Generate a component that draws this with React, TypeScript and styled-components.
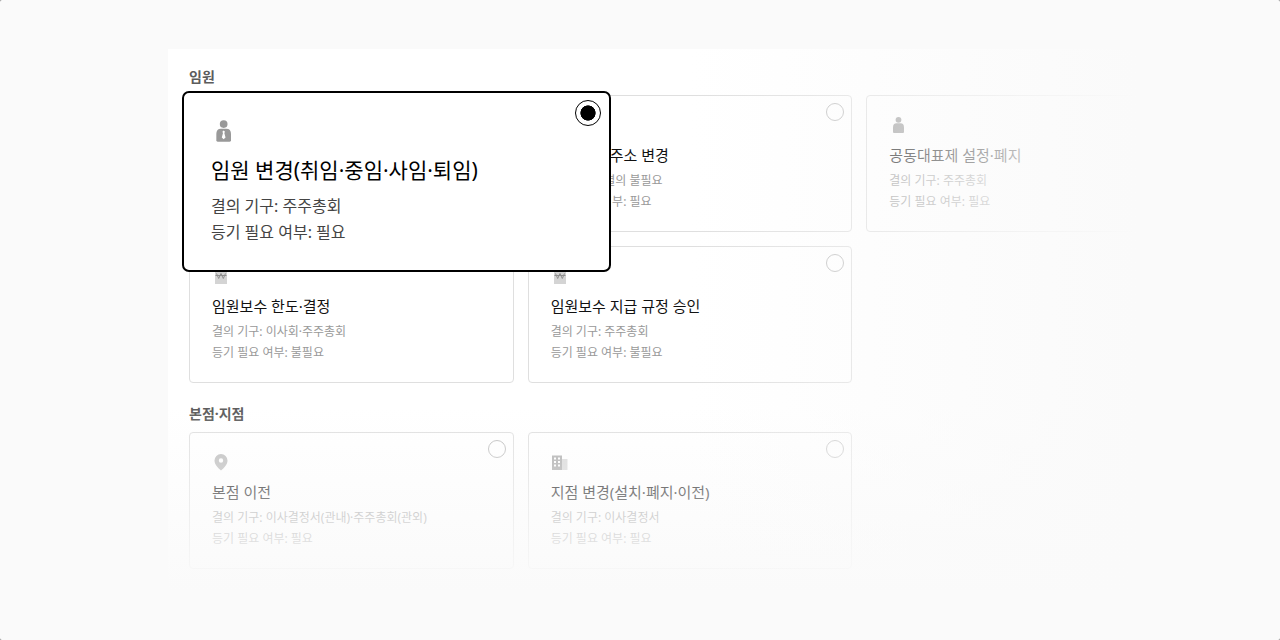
import React from "react";
import styled, { createGlobalStyle } from "styled-components";

const GlobalStyle = createGlobalStyle`
  *, *::before, *::after { box-sizing: border-box; }
  html { background: #8c8c8c; }
  body {
    margin: 0;
    font-family: "Noto Sans", "Noto Sans CJK KR", sans-serif;
    -webkit-font-smoothing: antialiased;
  }
`;

const Page = styled.main`
  min-height: 100vh;
  padding: 49px 68px 20px 168px;
  background: #fafafa;
  border-radius: 2px;
`;

const Panel = styled.form`
  position: relative;
  padding: 18px 21px 22px;
  background: #fff;

  &::after {
    content: "";
    position: absolute;
    inset: 0;
    z-index: 1;
    pointer-events: none;
    background:
      linear-gradient(to right, rgba(250, 250, 250, 0) 50%, #fafafa 93%),
      linear-gradient(to bottom, rgba(250, 250, 250, 0) 66%, #fafafa 100%);
  }
`;

const Section = styled.section`
  & + & { margin-top: 21px; }
`;

const SectionTitle = styled.h2`
  margin: 0 0 8px;
  font-size: 14px;
  line-height: 20px;
  font-weight: 700;
  color: #5c5c5c;
`;

const Cards = styled.div`
  display: grid;
  grid-template-columns: repeat(3, minmax(0, 1fr));
  gap: 14px;
`;

const Slot = styled.div`
  position: relative;
  min-height: 137px;
`;

const Card = styled.label<{ $large?: boolean }>`
  position: ${p => (p.$large ? "absolute" : "relative")};
  z-index: ${p => (p.$large ? 2 : 0)};
  top: ${p => (p.$large ? "-4px" : "auto")};
  left: ${p => (p.$large ? "-7px" : "auto")};
  width: ${p => (p.$large ? "132%" : "auto")};
  display: flex;
  flex-direction: column;
  align-items: flex-start;
  padding: ${p => (p.$large ? "26px 27px 25px" : "20px 22px 19px")};
  border: ${p => (p.$large ? "2px solid #000" : "1px solid #dfdfdf")};
  border-radius: ${p => (p.$large ? "7px" : "4px")};
  background: #fff;
  cursor: pointer;

  svg {
    width: ${p => (p.$large ? "24px" : "18px")};
    height: ${p => (p.$large ? "24px" : "18px")};
  }
`;

const Title = styled.span<{ $large?: boolean }>`
  margin-top: ${p => (p.$large ? "13px" : "9px")};
  margin-bottom: ${p => (p.$large ? "9px" : "3px")};
  font-size: ${p => (p.$large ? "21px" : "15px")};
  line-height: ${p => (p.$large ? "28px" : "24px")};
  font-weight: 400;
  color: ${p => (p.$large ? "#000" : "#111")};
  white-space: nowrap;
`;

const Detail = styled.span<{ $large?: boolean }>`
  font-size: ${p => (p.$large ? "16px" : "12px")};
  line-height: ${p => (p.$large ? "26px" : "21px")};
  color: ${p => (p.$large ? "#444" : "#999")};
  white-space: nowrap;
`;

const Radio = styled.input<{ $large?: boolean }>`
  appearance: none;
  position: absolute;
  top: 7px;
  right: ${p => (p.$large ? "8px" : "7px")};
  width: ${p => (p.$large ? "26px" : "18px")};
  height: ${p => (p.$large ? "26px" : "18px")};
  margin: 0;
  border: 1px solid #bdbdbd;
  border-radius: 50%;
  background: #fff;

  &:checked {
    border-color: #000;
    background: radial-gradient(circle closest-side, #000 61%, #fff 66%);
  }
`;

type IconName = "officer" | "person" | "won" | "pin" | "building";

function Icon({ name }: { name: IconName }) {
  return (
    <svg viewBox="0 0 18 18" aria-hidden="true">
      {(name === "officer" || name === "person") && (
        <>
          <circle cx="9.500" cy="3.800" r="2.900" fill="#999" />
          <path d="M4 11.200Q4 7.300 7.500 7.300h4Q15 7.300 15 11.200V16q0 1-1 1H5q-1 0-1-1Z" fill="#999" />
          {name === "officer" && <path d="m9.500 8.600 1 1-.5.900.9 3.400-1.400 1.200-1.400-1.200.9-3.400-.5-.9Z" fill="#fff" />}
        </>
      )}
      {name === "won" && (
        <>
          <path d="M3 2h12v15H3Z" fill="#d4d4d4" />
          <path d="M4.500 6.500l2.200 5L9 6.500l2.300 5 2.200-5M3.500 8.500h11" fill="none" stroke="#8f8f8f" />
        </>
      )}
      {name === "pin" && (
        <path
          fillRule="evenodd"
          d="M9 1a6.500 6.500 0 0 1 6.500 6.500c0 4-3.500 7.500-6.500 10C6 15 2.500 11.500 2.500 7.500A6.500 6.500 0 0 1 9 1Zm0 4.300a2.200 2.200 0 1 0 0 4.400A2.200 2.200 0 0 0 9 5.300Z"
          fill="#bcbcbc"
        />
      )}
      {name === "building" && (
        <>
          <path d="M10.500 6H16.500v11h-6Z" fill="#d8d8d8" />
          <path d="M1 2.500h10V17H1Z" fill="#ababab" />
          <path d="M3 4.500h2v2H3ZM7 4.500h2v2H7ZM3 8h2v2H3ZM7 8h2v2H7ZM3 11.500h2v2H3ZM7 11.500h2v2H7Z" fill="#fff" />
        </>
      )}
    </svg>
  );
}

interface Item {
  icon: IconName;
  title: string;
  organ: string;
  registry: string;
  large?: boolean;
}

const sections: { name: string; items: Item[] }[] = [
  {
    name: "임원",
    items: [
      { icon: "officer", title: "임원 변경(취임·중임·사임·퇴임)", organ: "주주총회", registry: "필요", large: true },
      { icon: "person", title: "대표이사 주소 변경", organ: "결의 불필요", registry: "필요" },
      { icon: "person", title: "공동대표제 설정·폐지", organ: "주주총회", registry: "필요" },
      { icon: "won", title: "임원보수 한도·결정", organ: "이사회·주주총회", registry: "불필요" },
      { icon: "won", title: "임원보수 지급 규정 승인", organ: "주주총회", registry: "불필요" },
    ],
  },
  {
    name: "본점·지점",
    items: [
      { icon: "pin", title: "본점 이전", organ: "이사결정서(관내)·주주총회(관외)", registry: "필요" },
      { icon: "building", title: "지점 변경(설치·폐지·이전)", organ: "이사결정서", registry: "필요" },
    ],
  },
];

export default function App() {
  return (
    <>
      <GlobalStyle />
      <Page>
        <Panel>
          {sections.map(section => (
            <Section key={section.name}>
              <SectionTitle>{section.name}</SectionTitle>
              <Cards>
                {section.items.map(item => (
                  <Slot key={item.title}>
                    <Card $large={item.large}>
                      <Icon name={item.icon} />
                      <Title $large={item.large}>{item.title}</Title>
                      <Detail $large={item.large}>결의 기구: {item.organ}</Detail>
                      <Detail $large={item.large}>등기 필요 여부: {item.registry}</Detail>
                      <Radio type="radio" name="agenda" value={item.title} defaultChecked={item.large} $large={item.large} />
                    </Card>
                  </Slot>
                ))}
              </Cards>
            </Section>
          ))}
        </Panel>
      </Page>
    </>
  );
}
